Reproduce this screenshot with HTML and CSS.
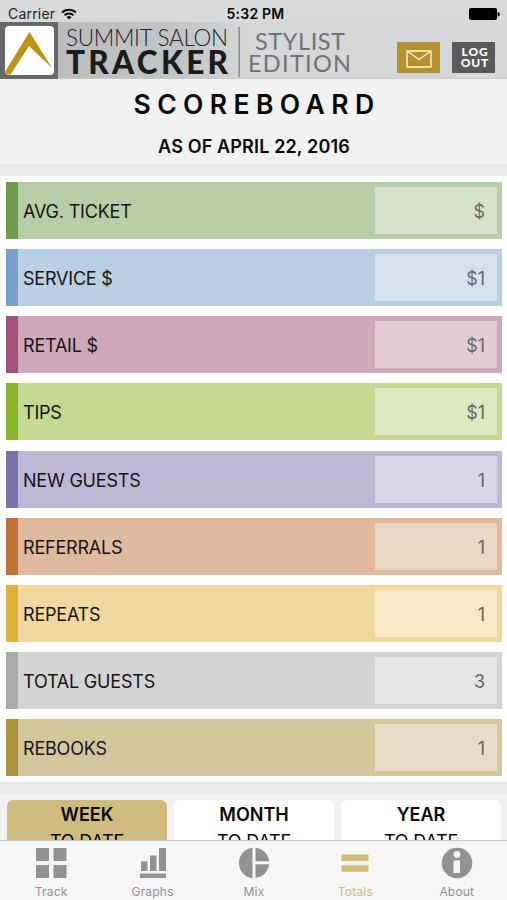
FILE: index.html
```html
<!DOCTYPE html>
<html lang="en">
<head>
  <meta charset="UTF-8">
  <meta name="viewport" content="width=device-width, initial-scale=1.0">
  <title>Summit Salon Tracker – Scoreboard</title>
  <link rel="stylesheet" href="styles.css">
</head>
<body>
  <div class="app">
    <!-- Status bar -->
    <div class="status">
      <div class="carrier">
        <span>Carrier</span>
        <svg width="16" height="12" viewBox="0 0 16 12" fill="none" stroke="#111" stroke-width="2">
          <path d="M1 4.6a10 10 0 0 1 14 0M3.5 7.3a6.4 6.4 0 0 1 9 0"/>
          <path d="M8 11.6L5.5 9.2a3.6 3.6 0 0 1 5 0z" fill="#111" stroke="none"/>
        </svg>
      </div>
      <div class="clock">5:32 PM</div>
      <div class="battery">
        <svg width="31" height="12" viewBox="0 0 31 12">
          <rect x="0" y="0" width="28" height="12" rx="2"/>
          <path d="M28.6 4a2.2 2.2 0 0 1 0 4.4z"/>
        </svg>
      </div>
    </div>

    <!-- Brand header -->
    <header class="header">
      <svg class="mark" width="58" height="57" viewBox="0 0 58 57">
        <rect width="58" height="57" fill="#686869"/>
        <rect x="5" y="4" width="49" height="49" rx="4" fill="#fff"/>
        <path d="M29.500 10L52 46 29 24 10.500 52.500H8Q5.500 52.500 5.500 49z" fill="#bd930f"/>
      </svg>
      <svg class="brand" width="300" height="57" viewBox="58 22 300 57">
        <text class="brand-thin" x="66" y="45.500" textLength="162">SUMMIT SALON</text>
        <text class="brand-bold" x="66" y="74" textLength="162">TRACKER</text>
        <rect x="238.500" y="27" width="1.200" height="50" fill="#77787a"/>
        <text class="brand-edition" x="255" y="50" textLength="90">STYLIST</text>
        <text class="brand-edition" x="248" y="71.500" textLength="103">EDITION</text>
      </svg>
      <div class="actions">
        <a class="button mail" href="#">
          <svg width="26" height="18" viewBox="0 0 26 18" fill="none" stroke="#fff3cf" stroke-width="1.400">
            <path d="M1 1h24v16H1zM1 1l12 8.500L25 1"/>
          </svg>
        </a>
        <a class="button logout" href="#">LOG<br>OUT</a>
      </div>
    </header>

    <div class="title">
      <h1>SCOREBOARD</h1>
      <h2>AS OF APRIL 22, 2016</h2>
    </div>

    <main class="board">
      <div class="row ticket"><span>AVG. TICKET</span><div class="value">$</div></div>
      <div class="row service"><span>SERVICE $</span><div class="value">$1</div></div>
      <div class="row retail"><span>RETAIL $</span><div class="value">$1</div></div>
      <div class="row tips"><span>TIPS</span><div class="value">$1</div></div>
      <div class="row new-guests"><span>NEW GUESTS</span><div class="value">1</div></div>
      <div class="row referrals"><span>REFERRALS</span><div class="value">1</div></div>
      <div class="row repeats"><span>REPEATS</span><div class="value">1</div></div>
      <div class="row total"><span>TOTAL GUESTS</span><div class="value">3</div></div>
      <div class="row rebooks"><span>REBOOKS</span><div class="value">1</div></div>
    </main>

    <div class="periods">
      <div class="period active"><b>WEEK</b><span>TO DATE</span></div>
      <div class="period"><b>MONTH</b><span>TO DATE</span></div>
      <div class="period"><b>YEAR</b><span>TO DATE</span></div>
    </div>

    <!-- Tab bar -->
    <nav class="tabs">
      <a class="tab" href="#">
        <svg width="32" height="32" viewBox="0 0 32 32">
          <path d="M1 1h13v13H1zM18.500 1h13v13h-13zM1 18h13v13H1zM18.500 18h13v13h-13z"/>
        </svg>
        <span>Track</span>
      </a>
      <a class="tab" href="#">
        <svg width="32" height="32" viewBox="0 0 32 32">
          <path d="M4 14.500h6.500v9.500H4zM13 8.500h6.500V24H13zM22 1h7v23h-7zM3 26.500h26V31H3z"/>
        </svg>
        <span>Graphs</span>
      </a>
      <a class="tab" href="#">
        <svg width="32" height="32" viewBox="0 0 32 32">
          <path d="M14.500 .8v30.400a15.300 15.300 0 0 1 0-30.400zM17.500 .8a15.300 15.300 0 0 1 13.700 13.400H17.500zM17.500 17.300h13.700a15.300 15.300 0 0 1-13.700 13.400z"/>
        </svg>
        <span>Mix</span>
      </a>
      <a class="tab active" href="#">
        <svg width="32" height="32" viewBox="0 0 32 32">
          <path d="M2.500 7.500h27v6.500h-27zM2.500 18.300h27v6.500h-27z"/>
        </svg>
        <span>Totals</span>
      </a>
      <a class="tab" href="#">
        <svg width="32" height="32" viewBox="0 0 32 32">
          <circle cx="16" cy="16" r="15.300"/>
          <circle cx="16" cy="7.500" r="3.500" fill="#f6f6f6"/>
          <path d="M12.500 13.500h6.500v12.500h-6.500z" fill="#f6f6f6"/>
        </svg>
        <span>About</span>
      </a>
    </nav>
  </div>
</body>
</html>
```
FILE: styles.css
```css
* {
  box-sizing: border-box;
}
html, body {
  margin: 0;
  padding: 0;
}
body {
  font-family: Inter, "Liberation Sans", sans-serif;
  color: #080808;
  background: #f1f1f1;
}
a {
  color: inherit;
  text-decoration: none;
}
.app {
  display: flex;
  flex-direction: column;
  width: 507px;
  height: 900px;
  overflow: hidden;
}

/* Status bar */
.status {
  display: grid;
  grid-template-columns: 1fr auto 1fr;
  align-items: center;
  flex: none;
  height: 22px;
  padding: 5px 7px 0 8px;
  background: #d7d9db;
  font-size: 14px;
  line-height: 16px;
}
.carrier {
  display: flex;
  align-items: center;
  gap: 6px;
  color: #222;
  letter-spacing: 0.2px;
}
.clock {
  padding-left: 3px;
  font-weight: 600;
  font-size: 14px;
  letter-spacing: 0.2px;
}
.battery {
  display: flex;
  justify-content: flex-end;
}

/* Header */
.header {
  display: flex;
  flex: none;
  height: 57px;
  background: linear-gradient(90deg, #bbbcbe 58px, #c2c4c6 180px, #d5d7d9 250px);
  border-bottom: 1px solid #c9cbcd;
}
.mark, .brand {
  flex: none;
}
.brand text {
  font-family: Lato, sans-serif;
}
.brand-thin {
  font-size: 22.5px;
  font-weight: 300;
  fill: #222;
}
.brand-bold {
  font-size: 31.5px;
  font-weight: 900;
  fill: #1b1b1c;
}
.brand-edition {
  font-size: 23.5px;
  fill: #727375;
}
.actions {
  display: flex;
  gap: 12px;
  padding: 20px 0 0 39px;
}
.button {
  display: flex;
  align-items: center;
  justify-content: center;
  width: 43px;
  height: 31px;
}
.mail {
  padding-top: 2px;
  background: #b5902e;
}
.logout {
  padding-left: 3px;
  background: #5a5a5b;
  color: #fff;
  font: 900 12px/10.5px Lato, sans-serif;
  letter-spacing: 0.8px;
  text-align: center;
}

/* Title */
.title {
  flex: none;
  height: 97px;
  background: #f1f1f1;
  border-bottom: 12px solid #e9e9e9;
  text-align: center;
}
h1, h2 {
  margin: 0;
  font-weight: 600;
}
h1 {
  padding: 9px 0 0 7px;
  font-size: 26.5px;
  line-height: 32px;
  letter-spacing: 6.4px;
}
h2 {
  padding: 16px 0 0 1px;
  font-size: 18px;
  line-height: 22px;
  letter-spacing: 0.15px;
}

/* Score rows */
.board {
  display: flex;
  flex-direction: column;
  flex: none;
  gap: 10.2px;
  height: 618px;
  padding: 5.8px 5px 0 6px;
  background: #fff;
  border-bottom: 12px solid #e9e9e9;
}
.row {
  display: flex;
  align-items: center;
  justify-content: space-between;
  flex: none;
  height: 57px;
  padding: 0 5px;
  border-left: 12px solid;
}
.row span {
  padding-top: 2px;
  color: #151515;
  font-size: 18px;
  letter-spacing: -0.2px;
}
.value {
  width: 122px;
  height: 47px;
  padding-right: 12px;
  background: rgba(255,255,255,0.42);
  color: #666;
  font-size: 18px;
  line-height: 49px;
  text-align: right;
}
.ticket { background: #b8cea7; border-color: #709e51; }
.service { background: #b9cfe4; border-color: #76a1c8; }
.retail { background: #d0a8b9; border-color: #a2527a; }
.tips { background: #c4da93; border-color: #88b529; }
.new-guests { background: #bdb8d4; border-color: #7b70a8; }
.referrals { background: #dfba9c; border-color: #bf7435; }
.repeats { background: #f1d89e; border-color: #e2b13d; }
.total { background: #d4d4d4; border-color: #aaa; }
.rebooks { background: #d5c79d; border-color: #ac923d; }

/* Period switch */
.periods {
  display: flex;
  flex: none;
  gap: 7px;
  height: 46px;
  padding: 6px 6px 0 7px;
  background: #f1f1f1;
  overflow: hidden;
}
.period {
  display: flex;
  flex: 1;
  flex-direction: column;
  align-items: center;
  height: 60px;
  padding-top: 3px;
  background: #fff;
  border-radius: 6px;
  font-size: 18px;
  line-height: 24px;
}
.period b {
  font-weight: 600;
}
.period span {
  padding-top: 3px;
  letter-spacing: -0.2px;
}
.period.active {
  background: #d1bc7f;
}

/* Tab bar */
.tabs {
  display: grid;
  grid-template-columns: repeat(5, 1fr);
  flex: none;
  height: 60px;
  background: #f6f6f6;
  border-top: 1px solid #c5c5c4;
}
.tab {
  display: flex;
  flex-direction: column;
  align-items: center;
  gap: 5px;
  padding: 6px 0 0 1px;
  color: #929292;
  font-size: 12px;
  line-height: 15px;
  letter-spacing: 0.2px;
}
.tab svg {
  fill: currentColor;
}
.tab.active {
  color: #d0bb79;
}
```
